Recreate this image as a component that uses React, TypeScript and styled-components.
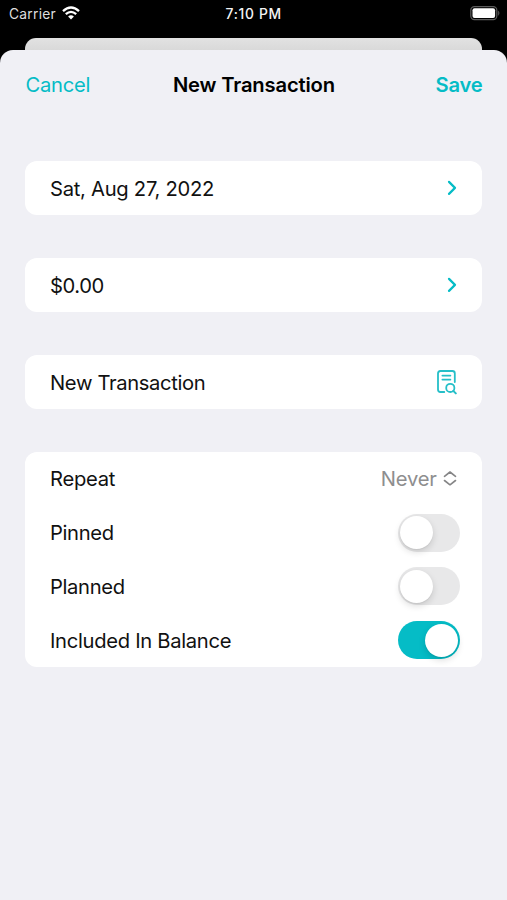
import React, { useState } from "react";
import styled, { createGlobalStyle } from "styled-components";

const TEAL = "#05bcc6";

const GlobalStyle = createGlobalStyle`
  * { box-sizing: border-box; }
  body {
    margin: 0;
    background: #000;
    font-family: Inter, "Liberation Sans", sans-serif;
    -webkit-font-smoothing: antialiased;
  }
  button { font: inherit; color: inherit; background: none; border: 0; padding: 0; }
`;

const Screen = styled.div`
  width: 507px;
  height: 900px;
  display: flex;
  flex-direction: column;
  overflow: hidden;
  background: #000;
`;

const StatusBar = styled.header`
  height: 38px;
  flex: none;
  display: grid;
  grid-template-columns: 1fr auto 1fr;
  align-items: start;
  padding: 5px 7px 0 9px;
  color: #f4f4f4;
  font-size: 13.8px;
  line-height: 18px;
`;

const Carrier = styled.div`
  display: flex;
  gap: 6px;
  color: #dedede;
  letter-spacing: 0.25px;
`;

const Clock = styled.time`
  margin-right: 1.5px;
  font-weight: 500;
  font-size: 13.8px;
  letter-spacing: 0.7px;
`;

const BatteryIcon = styled.svg`
  justify-self: end;
  display: block;
`;

const BackSheet = styled.div`
  height: 12px;
  flex: none;
  margin: 0 25px;
  border-radius: 11px 11px 0 0;
  background: linear-gradient(#e2e2e2, #d9d9d9);
`;

const Sheet = styled.main`
  flex: 1;
  border-radius: 13px 13px 0 0;
  background: #f0f0f5;
  padding: 0 24.6px 0 25.4px;
`;

const NavBar = styled.nav`
  height: 68px;
  display: grid;
  grid-template-columns: 1fr auto 1fr;
  align-items: center;
  font-size: 20.2px;
`;

const Title = styled.h1`
  margin: 0;
  font-size: 20.2px;
  font-weight: 600;
  letter-spacing: -0.17px;
`;

const NavButton = styled.button<{ $primary?: boolean }>`
  justify-self: ${(p) => (p.$primary ? "end" : "start")};
  color: ${TEAL};
  font-weight: ${(p) => (p.$primary ? 600 : 400)};
  letter-spacing: -0.25px;
`;

const Form = styled.div`
  display: flex;
  flex-direction: column;
  gap: 43.2px;
  padding-top: 43px;
`;

const Card = styled.section`
  border-radius: 12px;
  background: #fff;
`;

const Row = styled.div<{ $inset: number }>`
  height: 53.75px;
  display: flex;
  align-items: center;
  justify-content: space-between;
  padding: 0.5px ${(p) => p.$inset}px 0 24.6px;
  color: #111;
  font-size: 20.2px;
`;

const Label = styled.span<{ $track?: number }>`
  letter-spacing: ${(p) => p.$track ?? -0.27}px;
`;

const Picker = styled.span`
  display: flex;
  align-items: center;
  gap: 6px;
  color: #8e8e8f;
  letter-spacing: -0.2px;
`;

const Track = styled.button<{ $on: boolean }>`
  width: 62.5px;
  height: 38px;
  border-radius: 19px;
  padding: 2.5px;
  display: flex;
  justify-content: ${(p) => (p.$on ? "flex-end" : "flex-start")};
  background: ${(p) => (p.$on ? TEAL : "#e8e8e9")};
`;

const Knob = styled.span`
  width: 33px;
  height: 33px;
  border-radius: 50%;
  background: #fff;
  box-shadow: 0 3px 7px rgba(0, 0, 0, 0.14), 0 1px 1px rgba(0, 0, 0, 0.05);
`;

function Switch({ initial = false, label }: { initial?: boolean; label: string }) {
  const [on, setOn] = useState(initial);
  return (
    <Track $on={on} role="switch" aria-checked={on} aria-label={label} onClick={() => setOn(!on)}>
      <Knob />
    </Track>
  );
}

const Wifi = () => (
  <svg width="18" height="15" viewBox="0 0 18 15" fill="none" stroke="#fff" strokeWidth="2.3">
    <path d="M1 6.2Q9-1.2 17 6.2" />
    <path d="M3.8 9.2Q9 4.5 14.2 9.2" />
    <path d="M9 14.4L6.1 11.5Q9 9.1 11.9 11.5Z" fill="#fff" stroke="none" />
  </svg>
);

const Battery = () => (
  <BatteryIcon width="31" height="16" viewBox="0 0 31 16">
    <rect x="1.8" y="1.6" width="26" height="13" rx="3.6" fill="none" stroke="#5c5c5c" strokeWidth="1.2" />
    <rect x="3.5" y="3.3" width="22.6" height="9.6" rx="2" fill="#fff" />
    <path d="M29.3 5.8q1.9 2.3 0 4.6z" fill="#5c5c5c" stroke="#5c5c5c" strokeWidth=".4" />
  </BatteryIcon>
);

const Chevron = () => (
  <svg width="10" height="16" viewBox="0 0 10 16" fill="none" stroke={TEAL} strokeWidth="2.2" strokeLinecap="round" strokeLinejoin="round">
    <path d="M2 1.9L8 7.9L2 13.9" />
  </svg>
);

const UpDown = () => (
  <svg width="14" height="16" viewBox="0 0 14 16" fill="none" stroke="#858586" strokeWidth="1.6" strokeLinecap="round" strokeLinejoin="round">
    <path d="M1.5 5.3L7 1L12.5 5.3M1.5 9.5L7 13.8L12.5 9.5" />
  </svg>
);

const DocSearch = () => (
  <svg width="20" height="25" viewBox="0 0 20 25" fill="none" stroke="#25bfc8" strokeWidth="1.8" strokeLinecap="round">
    <path d="M7.3 22H3.4Q1 22 1 19.6V3.4Q1 1 3.4 1H15.4Q17.8 1 17.8 3.4V12" />
    <path d="M5.4 5.6H13.4M5.4 9.6H13.4" />
    <circle cx="13.3" cy="17.9" r="4.1" />
    <path d="M16.3 20.9L18.8 23.4" strokeWidth="2" />
  </svg>
);

export default function App() {
  return (
    <>
      <GlobalStyle />
      <Screen>
        <StatusBar>
          <Carrier>
            <span>Carrier</span>
            <Wifi />
          </Carrier>
          <Clock>7:10 PM</Clock>
          <Battery />
        </StatusBar>
        <BackSheet />
        <Sheet>
          <NavBar>
            <NavButton>Cancel</NavButton>
            <Title>New Transaction</Title>
            <NavButton $primary>Save</NavButton>
          </NavBar>
          <Form>
            <Card>
              <Row $inset={25.4}>
                <Label>Sat, Aug 27, 2022</Label>
                <Chevron />
              </Row>
            </Card>
            <Card>
              <Row $inset={25.4}>
                <Label $track={-0.4}>$0.00</Label>
                <Chevron />
              </Row>
            </Card>
            <Card>
              <Row $inset={25.4}>
                <Label $track={-0.35}>New Transaction</Label>
                <DocSearch />
              </Row>
            </Card>
            <Card>
              <Row $inset={25.8}>
                <Label>Repeat</Label>
                <Picker>
                  Never
                  <UpDown />
                </Picker>
              </Row>
              <Row $inset={22}>
                <Label $track={-0.33}>Pinned</Label>
                <Switch label="Pinned" />
              </Row>
              <Row $inset={22}>
                <Label $track={-0.33}>Planned</Label>
                <Switch label="Planned" />
              </Row>
              <Row $inset={22}>
                <Label $track={-0.3}>Included In Balance</Label>
                <Switch label="Included In Balance" initial />
              </Row>
            </Card>
          </Form>
        </Sheet>
      </Screen>
    </>
  );
}
